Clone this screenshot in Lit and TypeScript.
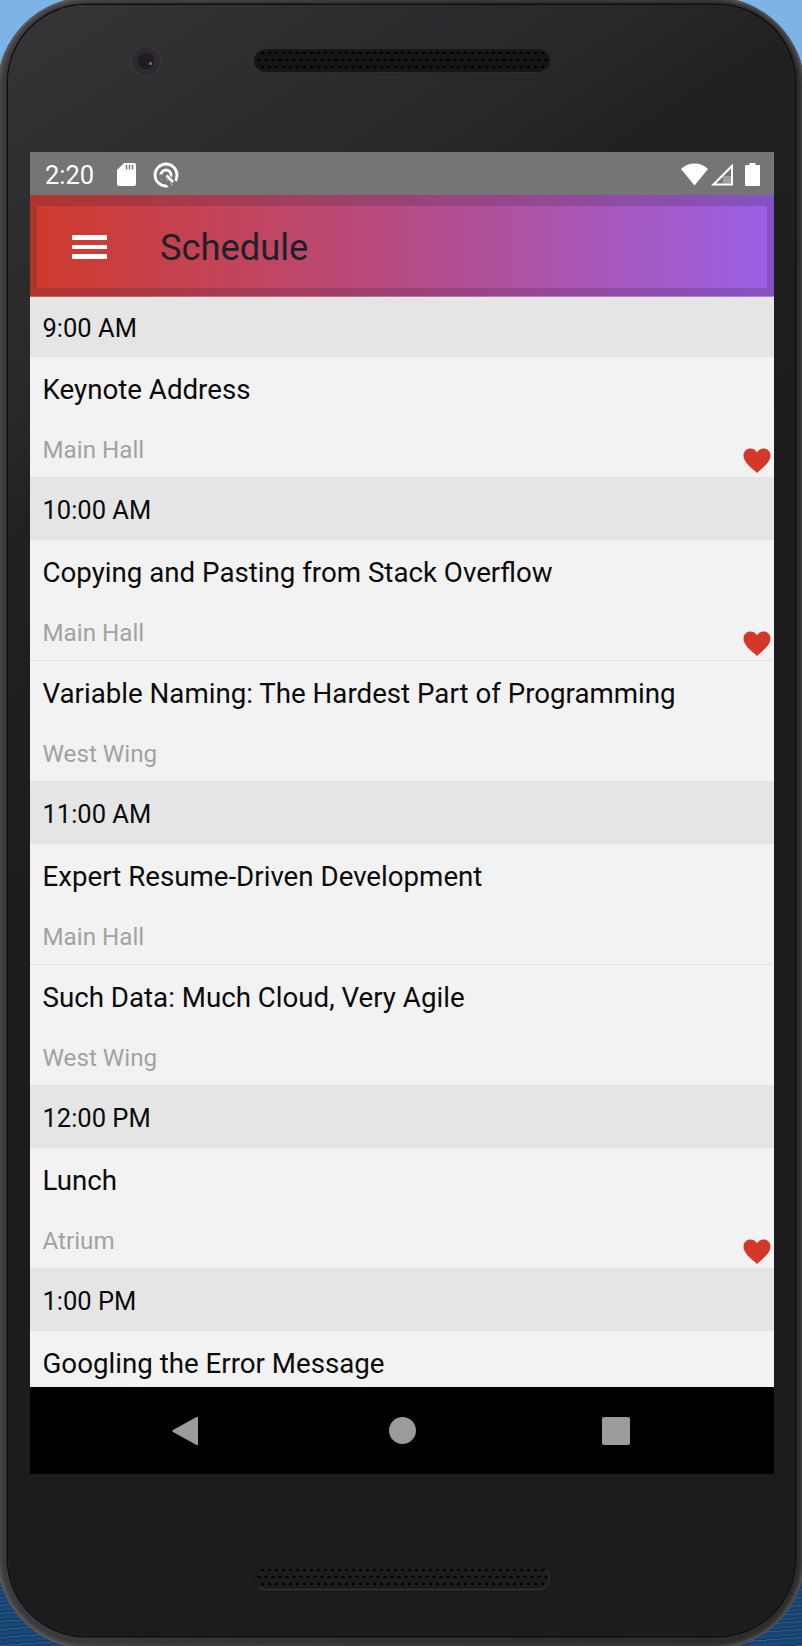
import { LitElement, html, css, svg } from "lit";
import { customElement } from "lit/decorators.js";

type Row =
  | { kind: "time"; label: string; first?: boolean }
  | { kind: "talk"; title: string; room: string; fav?: boolean; rule?: boolean };

const ROWS: Row[] = [
  { kind: "time", label: "9:00 AM", first: true },
  { kind: "talk", title: "Keynote Address", room: "Main Hall", fav: true },
  { kind: "time", label: "10:00 AM" },
  { kind: "talk", title: "Copying and Pasting from Stack Overflow", room: "Main Hall", fav: true, rule: true },
  { kind: "talk", title: "Variable Naming: The Hardest Part of Programming", room: "West Wing" },
  { kind: "time", label: "11:00 AM" },
  { kind: "talk", title: "Expert Resume-Driven Development", room: "Main Hall", rule: true },
  { kind: "talk", title: "Such Data: Much Cloud, Very Agile", room: "West Wing" },
  { kind: "time", label: "12:00 PM" },
  { kind: "talk", title: "Lunch", room: "Atrium", fav: true },
  { kind: "time", label: "1:00 PM" },
  { kind: "talk", title: "Googling the Error Message", room: "" },
];

const heart = svg`<path d="M14 25 C12 22.500 0.500 15.500 0.500 7.500 C0.500 3.200 3.800 0.500 7.500 0.500 C10.200 0.500 12.700 2 14 4.500 C15.300 2 17.800 0.500 20.500 0.500 C24.200 0.500 27.500 3.200 27.500 7.500 C27.500 15.500 16 22.500 14 25 Z" fill="#d13a2b"/>`;

@customElement("app-root")
export class AppRoot extends LitElement {
  static styles = css`
    :host {
      display: block;
      width: 802px;
      height: 1646px;
      font-family: Roboto, "Liberation Sans", sans-serif;
      overflow: hidden;
    }
    .wall {
      width: 802px;
      height: 1646px;
      overflow: hidden;
      background:
        repeating-linear-gradient(176deg, #1d4a7b 0 2px, #16406c 2px 4px, #2b5b8d 4px 5px, #1a4470 5px 8px) bottom / 100% 50% no-repeat,
        linear-gradient(#7eb3e6, #7eb3e6) top / 100% 50% no-repeat;
    }
    .phone {
      box-sizing: border-box;
      width: 808px;
      height: 1652px;
      margin: -3px;
      padding: 8px 10px 13px 11px;
      border-radius: 92px;
      background: linear-gradient(90deg, #3c3c3c, #303030 50%, #2c2c2c);
      box-shadow: inset 0 0 4px 2px rgba(130, 130, 130, 0.6);
    }
    .face {
      box-sizing: border-box;
      height: 1631px;
      padding: 147px 21px 0 22px;
      border-radius: 78px;
      box-shadow: 0 0 0 1.500px #0f0f0f;
      background: linear-gradient(147deg, #353537 0%, #272728 20%, #212122 25%, #1c1c1c 46%, #1c1c1c 100%);
      display: flex;
      flex-direction: column;
      position: relative;
    }
    .camera {
      position: absolute;
      left: 123px;
      top: 41px;
      width: 30px;
      height: 30px;
      border-radius: 50%;
      background: radial-gradient(circle at 50% 50%, #1d1c26 0 7.500px, #2b2b2d 9px 13.500px, #3a3a3b 14.500px);
    }
    .camera::after {
      content: "";
      position: absolute;
      left: 18px;
      top: 16px;
      width: 3px;
      height: 3px;
      border-radius: 50%;
      background: #b5606c;
    }
    .speaker {
      position: absolute;
      left: 246px;
      width: 296px;
      height: 24px;
      box-sizing: border-box;
      border-radius: 12px;
      background-color: #151515;
      background-image:
        radial-gradient(circle, #000 1.100px, transparent 1.600px),
        radial-gradient(circle, #000 1.100px, transparent 1.600px);
      background-size: 7px 14px;
      background-position: 4px -4px, 7.500px 3px;
      border: 1px solid #181818;
      border-bottom-color: #2e2e2e;
    }
    .speaker.top { top: 44px; }
    .speaker.bottom { top: 1561px; background-color: #1d1d1d; border-color: #181818 #333 #3a3a3a #181818; }
    .status {
      height: 43px;
      flex: none;
      background: #757575;
      display: flex;
      align-items: center;
      padding: 2px 14px 0 15px;
      box-sizing: border-box;
      color: #fff;
      font-size: 25.500px;
    }
    .time { width: 72px; }
    .status svg { display: block; }
    .ring { margin-left: 17px; }
    .spacer { flex: 1; }
    .wifi { margin-bottom: 1px; }
    .signal { margin-left: 3px; margin-bottom: 1px; }
    .battery { margin-left: 12px; margin-bottom: 1px; }
    .appbar {
      height: 102px;
      flex: none;
      box-sizing: border-box;
      background: linear-gradient(90deg, #cf3a2a 0%, #b94a7b 45%, #9a60e6 100%);
      border-bottom: 1px solid rgba(255, 255, 255, 0.2);
    }
    .bar-inner {
      box-sizing: border-box;
      height: 101px;
      border: solid rgba(50, 30, 60, 0.2);
      border-width: 11px 7px 8px;
      display: flex;
      align-items: center;
    }
    .menu {
      margin-left: 35px;
      width: 35px;
      height: 23.500px;
      display: flex;
      flex-direction: column;
      justify-content: space-between;
    }
    .menu i {
      display: block;
      height: 4.500px;
      background: #fff;
    }
    .title {
      margin-left: 53px;
      font-size: 36.300px;
      color: #20202a;
    }
    .list {
      flex: none;
      height: 1090px;
      overflow: hidden;
      background: #f2f2f2;
    }
    .hdr {
      height: 62.700px;
      box-sizing: border-box;
      background: #e5e5e5;
      display: flex;
      align-items: center;
      padding: 3px 0 0 12.500px;
      font-size: 25.500px;
      color: #0b0b0b;
    }
    .hdr.first { height: 60px; padding-top: 2px; }
    .talk {
      position: relative;
      box-sizing: border-box;
      height: 120.300px;
      padding: 15px 12.500px 0;
      background: #f2f2f2;
    }
    .talk.rule {
      height: 121px;
      border-bottom: 1px solid #e3e3e3;
    }
    .talk .name {
      font-size: 27.700px;
      line-height: 36px;
      color: #0b0b0b;
      white-space: nowrap;
    }
    .talk .room {
      margin-top: 27px;
      font-size: 24.200px;
      line-height: 30px;
      color: #a2a2a2;
    }
    .fav {
      position: absolute;
      right: 3px;
      bottom: 3px;
      display: block;
    }
    .nav {
      height: 87px;
      flex: none;
      background: #000;
      display: flex;
      align-items: center;
    }
    .nav .back { margin-left: 142px; }
    .nav .home { margin-left: 191px; }
    .nav .recent { margin-left: 186px; }
  `;

  private renderRow(r: Row) {
    if (r.kind === "time") {
      return html`<div class="hdr ${r.first ? "first" : ""}">${r.label}</div>`;
    }
    return html`<div class="talk ${r.rule ? "rule" : ""}">
      <div class="name">${r.title}</div>
      ${r.room ? html`<div class="room">${r.room}</div>` : ""}
      ${r.fav
        ? html`<svg class="fav" width="28" height="26" viewBox="0 0 28 26">${heart}</svg>`
        : ""}
    </div>`;
  }

  render() {
    return html`<div class="wall">
      <div class="phone">
        <div class="face">
          <div class="camera"></div>
          <div class="speaker top"></div>
          <div class="speaker bottom"></div>
          <div class="status">
            <span class="time">2:20</span>
            <svg width="19" height="23" viewBox="0 0 19 23">
              <path d="M7 0 H17 a2 2 0 0 1 2 2 V21 a2 2 0 0 1 -2 2 H2 a2 2 0 0 1 -2 -2 V7 Z" fill="#fff" />
              <path d="M9.500 2 v4.500 M12.500 2 v4.500 M15.500 2 v4.500" stroke="#757575" stroke-width="1.500" />
            </svg>
            <svg class="ring" width="26" height="26" viewBox="0 0 26 26">
              <circle cx="13" cy="13" r="11" fill="none" stroke="#fff" stroke-width="2.800" />
              <circle cx="13" cy="13" r="5" fill="none" stroke="#fff" stroke-width="2.800" />
              <path d="M7 13 L19 26" stroke="#757575" stroke-width="3.500" />
              <path d="M13.500 13.500 L22 22" stroke="#757575" stroke-width="5" />
              <path d="M13.500 13.500 L20 20" stroke="#fff" stroke-width="2.800" />
            </svg>
            <span class="spacer"></span>
            <svg class="wifi" width="27" height="23" viewBox="0 0 27 23"><path d="M13.500 22.500 L0 6 C3.500 2.500 8 0.500 13.500 0.500 C19 0.500 23.500 2.500 27 6 Z" fill="#fff" /></svg>
            <svg class="signal" width="22" height="23" viewBox="0 0 22 23">
              <path d="M22 0.500 V22.500 H0 Z M20 5.500 L5 20.500 H20 Z" fill="#fff" fill-rule="evenodd" />
              <path d="M12 13 V20.500 H20 V13 Z" fill="#fff" fill-opacity="0.3" />
            </svg>
            <svg class="battery" width="15" height="23" viewBox="0 0 15 23">
              <path d="M4.500 0 H10.500 V2 H14 a1 1 0 0 1 1 1 V22 a1 1 0 0 1 -1 1 H1 a1 1 0 0 1 -1 -1 V3 a1 1 0 0 1 1 -1 H4.500 Z" fill="#fff" />
            </svg>
          </div>
          <div class="appbar">
            <div class="bar-inner">
              <div class="menu"><i></i><i></i><i></i></div>
              <div class="title">Schedule</div>
            </div>
          </div>
          <div class="list">${ROWS.map((r) => this.renderRow(r))}</div>
          <div class="nav">
            <svg class="back" width="26" height="30" viewBox="0 0 26 30"><path d="M25 1 a1 1 0 0 1 1 1 V28 a1 1 0 0 1 -1.500 1 L1 16 a1.200 1.200 0 0 1 0 -2 L24.500 1 Z" fill="#9b9b9b" /></svg>
            <svg class="home" width="27" height="27" viewBox="0 0 27 27"><circle cx="13.500" cy="13.500" r="13.500" fill="#9b9b9b" /></svg>
            <svg class="recent" width="28" height="28" viewBox="0 0 28 28"><rect width="28" height="28" rx="2" fill="#9b9b9b" /></svg>
          </div>
        </div>
      </div>
    </div>`;
  }
}
